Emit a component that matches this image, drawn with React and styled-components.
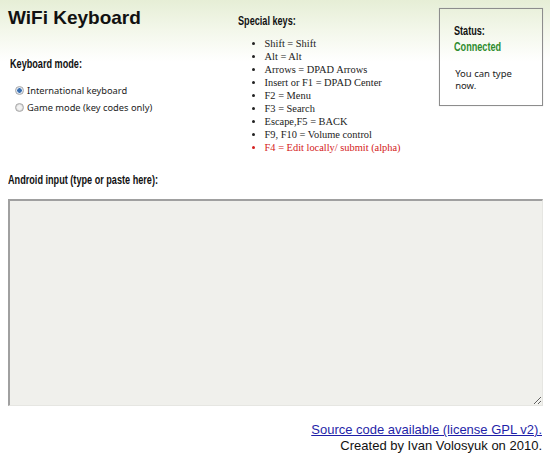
import React from 'react';
import styled, { createGlobalStyle } from 'styled-components';

const Global = createGlobalStyle`
  html, body {
    margin: 0;
    padding: 0;
  }
  body {
    background: linear-gradient(to bottom, #e6eed6 0px, #f3f7ea 30px, #ffffff 62px) no-repeat;
    background-color: #ffffff;
    font-family: "Liberation Sans", Arial, sans-serif;
    width: 550px;
    height: 455px;
    overflow: hidden;
  }
`;

const Page = styled.div`
  padding: 8px 7px 0 8px;
`;

const Top = styled.div`
  display: flex;
  align-items: flex-start;
  height: 165px;
`;

const LeftCol = styled.div`
  width: 230px;
`;

const Title = styled.h1`
  margin: 0;
  font-family: "Liberation Sans", Arial, sans-serif;
  font-size: 19px;
  font-weight: bold;
  color: #111;
  line-height: 20px;
`;

const Heading = styled.h3`
  margin: ${p => p.$top || 0}px 0 0 ${p => p.$left || 0}px;
  font-family: "Liberation Sans", Arial, sans-serif;
  font-size: 12px;
  font-weight: bold;
  color: ${p => p.$color || '#111'};
  line-height: 14px;
  white-space: nowrap;
  transform: scaleX(0.76);
  transform-origin: left center;
`;

const Modes = styled.div`
  margin: 13px 0 0 7px;
  display: flex;
  flex-direction: column;
  gap: 4px;
`;

const ModeLabel = styled.label`
  display: flex;
  align-items: center;
  gap: 3px;
  font-family: "Noto Sans", "Open Sans", sans-serif;
  font-size: 9.3px;
  color: #222;
  line-height: 13px;
`;

const Radio = styled.span`
  width: 7px;
  height: 7px;
  border-radius: 50%;
  border: 1px solid #a7a7a7;
  background: ${p => p.$on ? 'radial-gradient(circle, #3a6fb0 0 2px, #dfe8f4 2.5px)' : 'radial-gradient(circle, #f2f2f2 0 2px, #dcdcdc 3px)'};
`;

const MidCol = styled.div`
  width: 202px;
  padding-top: 6px;
`;

const KeyList = styled.ul`
  margin: 9px 0 0 0;
  padding-left: 27px;
  font-family: "Liberation Serif", "Times New Roman", serif;
  font-size: 10.4px;
  line-height: 13px;
  color: #222;
  list-style: disc;
`;

const KeyItem = styled.li`
  color: ${p => p.$alert ? '#d42020' : '#222'};
`;

const StatusBox = styled.div`
  width: 88px;
  height: 81px;
  border: 1px solid #8d8d8d;
  box-shadow: 0 0 1px #cfcfcf;
  padding: 15px 0 0 14px;
  box-sizing: content-box;
`;

const StatusText = styled.p`
  margin: 14px 0 0 1px;
  width: 62px;
  font-family: "Noto Sans", "Open Sans", sans-serif;
  font-size: 9.5px;
  line-height: 12px;
  color: #222;
`;

const Input = styled.textarea`
  display: block;
  width: 535px;
  height: 207px;
  margin-top: 12px;
  box-sizing: border-box;
  background: #f0f0ec;
  border-style: solid;
  border-width: 2px 1px 1px 2px;
  border-color: #a0a0a0 #e6e6e2 #e6e6e2 #a0a0a0;
  resize: both;
  outline: none;
`;

const Footer = styled.div`
  margin-top: 16px;
  padding-right: 1px;
  text-align: right;
  font-family: "Liberation Sans", Arial, sans-serif;
  font-size: 13px;
  line-height: 16px;
  color: #111;
`;

const SourceLink = styled.a`
  color: #1f1fa8;
  text-decoration: underline;
`;

const keys = [
  'Shift = Shift',
  'Alt = Alt',
  'Arrows = DPAD Arrows',
  'Insert or F1 = DPAD Center',
  'F2 = Menu',
  'F3 = Search',
  'Escape,F5 = BACK',
  'F9, F10 = Volume control',
];

export default function App() {
  return (
    <>
      <Global />
      <Page>
        <Top>
          <LeftCol>
            <Title>WiFi Keyboard</Title>
            <Heading $top={29} $left={2}>Keyboard mode:</Heading>
            <Modes>
              <ModeLabel><Radio $on />International keyboard</ModeLabel>
              <ModeLabel><Radio />Game mode (key codes only)</ModeLabel>
            </Modes>
          </LeftCol>
          <MidCol>
            <Heading>Special keys:</Heading>
            <KeyList>
              {keys.map(k => <KeyItem key={k}>{k}</KeyItem>)}
              <KeyItem $alert>F4 = Edit locally/ submit (alpha)</KeyItem>
            </KeyList>
          </MidCol>
          <StatusBox>
            <Heading>Status:</Heading>
            <Heading $top={2} $color="#2e8b2e">Connected</Heading>
            <StatusText>You can type now.</StatusText>
          </StatusBox>
        </Top>
        <Heading>Android input (type or paste here):</Heading>
        <Input />
        <Footer>
          <SourceLink href="#">Source code available (license GPL v2).</SourceLink>
          <div>Created by Ivan Volosyuk on 2010.</div>
        </Footer>
      </Page>
    </>
  );
}
